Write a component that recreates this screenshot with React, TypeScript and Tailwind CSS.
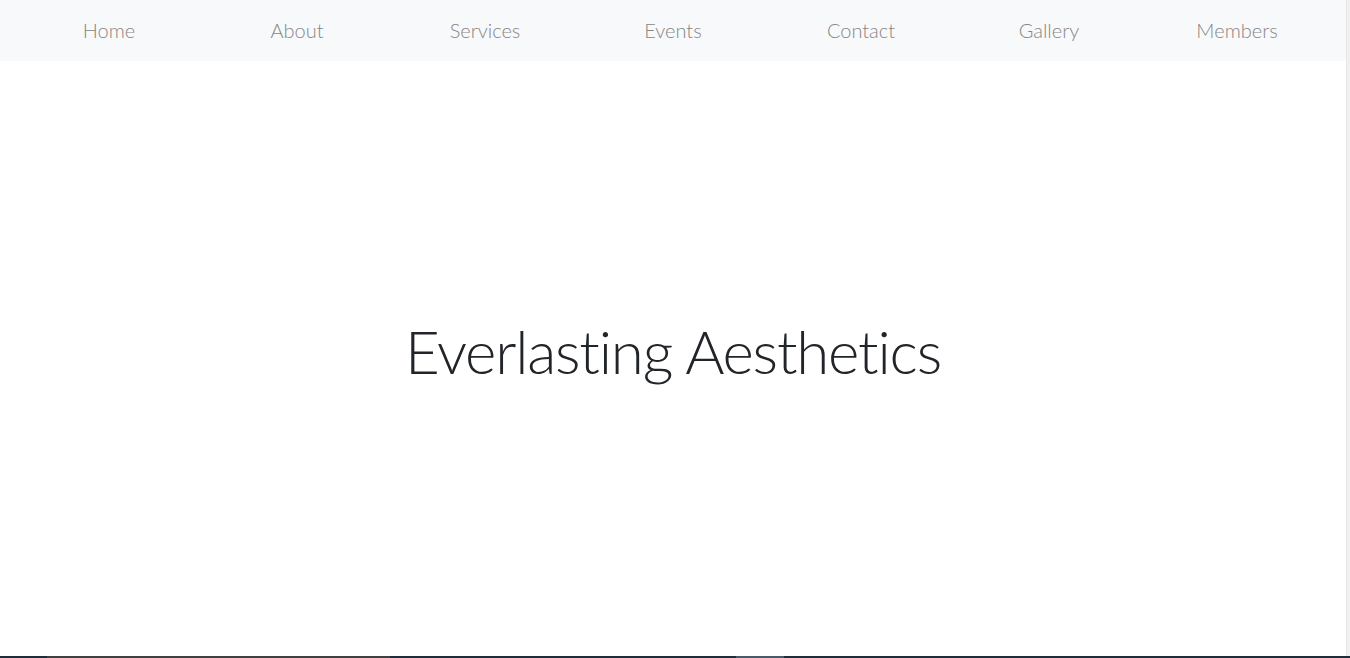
import React from "react";

const links = ["Home", "About", "Services", "Events", "Contact", "Gallery", "Members"];

const App: React.FC = () => {
  return (
    <div className="h-[658px] w-[1350px] flex flex-col bg-white overflow-hidden font-['Lato','Liberation_Sans',sans-serif]">
      <div className="flex flex-1">
        <div className="w-[1346px] flex flex-col">
          <nav className="h-[61px] bg-[#f8f9fa] px-[15px] flex items-center">
            {links.map((l) => (
              <a key={l} href="#" className="flex-1 text-center text-[20px] font-light text-[#868686] leading-none -mt-[1px]">
                {l}
              </a>
            ))}
          </nav>
          <div className="flex-1 flex items-center justify-center pb-[16px]">
            <h1 className="text-[60px] font-light text-[#212529] leading-none tracking-[-1.2px]">
              Everlasting Aesthetics
            </h1>
          </div>
        </div>
        <div className="w-[4px] bg-[#f0f0f0] border-l border-[#e8e8e8]" />
      </div>
      <div className="h-[2px] flex">
        <div className="w-[47px] bg-[#1f2d3a]" />
        <div className="w-[343px] bg-[#404040]" />
        <div className="w-[346px] bg-[#1f2d3a]" />
        <div className="w-[48px] bg-[#4a5a68]" />
        <div className="flex-1 bg-[#1f2d3a]" />
      </div>
    </div>
  );
};

export default App;
